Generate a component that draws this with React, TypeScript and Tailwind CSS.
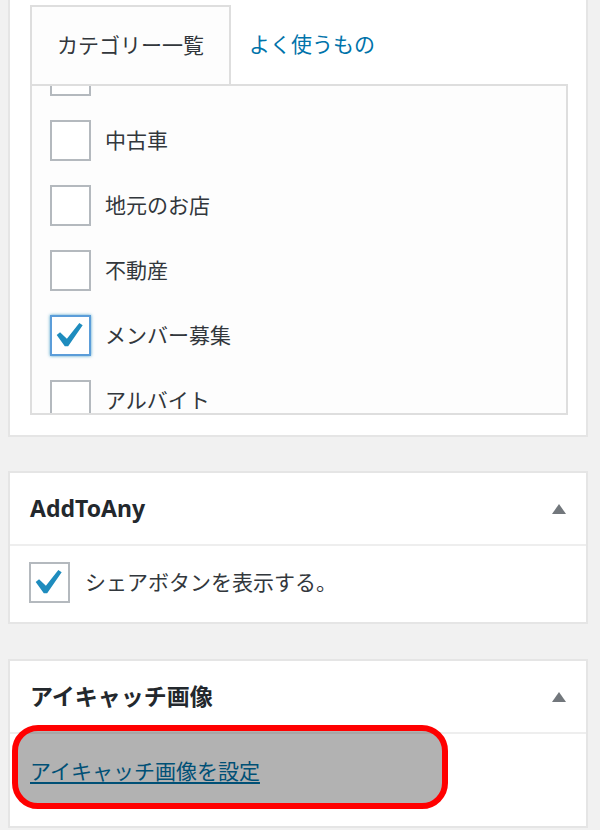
import React from 'react';

const categories = [
  { label: '', checked: false },
  { label: '中古車', checked: false },
  { label: '地元のお店', checked: false },
  { label: '不動産', checked: false },
  { label: 'メンバー募集', checked: true },
  { label: 'アルバイト', checked: false },
];

// dashicons "yes" mark
function Check() {
  return (
    <svg width="27.5" height="25" viewBox="5.5 4.5 11 10" className="block">
      <path fill="#1e8cbe" d="M14.83 4.89l1.34.94-5.81 8.38H9.02L5.78 9.67l1.34-1.12 2.74 2.62 4.97-6.28z" />
    </svg>
  );
}

function Checkbox({ checked, focused }: { checked: boolean; focused?: boolean }) {
  return (
    <div
      className={
        focused
          ? 'flex h-[41px] w-[41px] shrink-0 items-start border-2 border-[#5b9dd9] bg-white pl-[4px] pt-[5px] shadow-[0_0_3px_rgba(30,140,190,0.8)]'
          : checked
          ? 'flex h-[41px] w-[41px] shrink-0 items-start border-2 border-[#b4b9be] bg-white pl-[4px] pt-[5px]'
          : 'h-[41px] w-[41px] shrink-0 border-2 border-[#b4b9be] bg-white'
      }
    >
      {checked && <Check />}
    </div>
  );
}

function Toggle() {
  return (
    <svg width="14" height="10" viewBox="0 0 14 10">
      <path d="M7 0L14 10H0z" fill="#72777c" />
    </svg>
  );
}

function PanelHeader({ title }: { title: string }) {
  return (
    <div className="flex h-[73px] items-center justify-between border-b-2 border-[#eeeeee] pl-5 pr-[20px]">
      <h2 className="text-[23px] font-bold leading-none text-[#23282d]">{title}</h2>
      <Toggle />
    </div>
  );
}

export default function App() {
  return (
    <div className="min-h-[830px] bg-[#f1f1f1] pb-1 pl-2 pr-3 font-['Noto_Sans','Noto_Sans_CJK_JP',sans-serif] text-[#32373c]">
      {/* Categories */}
      <div className="border-2 border-t-0 border-[#e5e5e5] bg-white pb-[20px] pl-5 pr-[18px] pt-[5px]">
        <div className="flex items-end">
          <div className="flex h-[79px] items-center border-2 border-b-0 border-[#dedede] bg-[#fdfdfd] px-[25px] text-[21px] leading-none text-[#32373c]">
            カテゴリー一覧
          </div>
          <div className="flex h-[79px] items-center pl-[18px] text-[21px] leading-none text-[#0073aa]">
            よく使うもの
          </div>
        </div>
        <div className="h-[331px] overflow-hidden border-2 border-[#dedede] bg-[#fdfdfd]">
          <div className="-mt-[31px] flex flex-col gap-6 pl-[18px]">
            {categories.map((c, i) => (
              <div key={i} className="flex items-center gap-[14px]">
                <Checkbox checked={c.checked} focused={c.checked} />
                <span className="text-[21px] leading-none">{c.label}</span>
              </div>
            ))}
          </div>
        </div>
      </div>

      {/* AddToAny */}
      <div className="mt-[34px] border-2 border-[#e5e5e5] bg-white">
        <PanelHeader title="AddToAny" />
        <div className="flex items-center gap-[15px] pb-[19px] pl-[19px] pt-[16px]">
          <Checkbox checked />
          <span className="text-[21px] leading-none">シェアボタンを表示する。</span>
        </div>
      </div>

      {/* Featured image */}
      <div className="relative mt-[35px] border-2 border-[#e5e5e5] bg-white">
        <PanelHeader title="アイキャッチ画像" />
        <div className="pb-[40px] pl-5 pt-[22px]">
          <a className="text-[21px] leading-[30px] text-[#0073aa] underline decoration-[1.5px] underline-offset-[3px]">
            アイキャッチ画像を設定
          </a>
        </div>
        <div className="pointer-events-none absolute left-[2px] top-[64px] h-[84px] w-[436px] rounded-[26px] border-[6px] border-[#ff0000] bg-black/30" />
      </div>
    </div>
  );
}
